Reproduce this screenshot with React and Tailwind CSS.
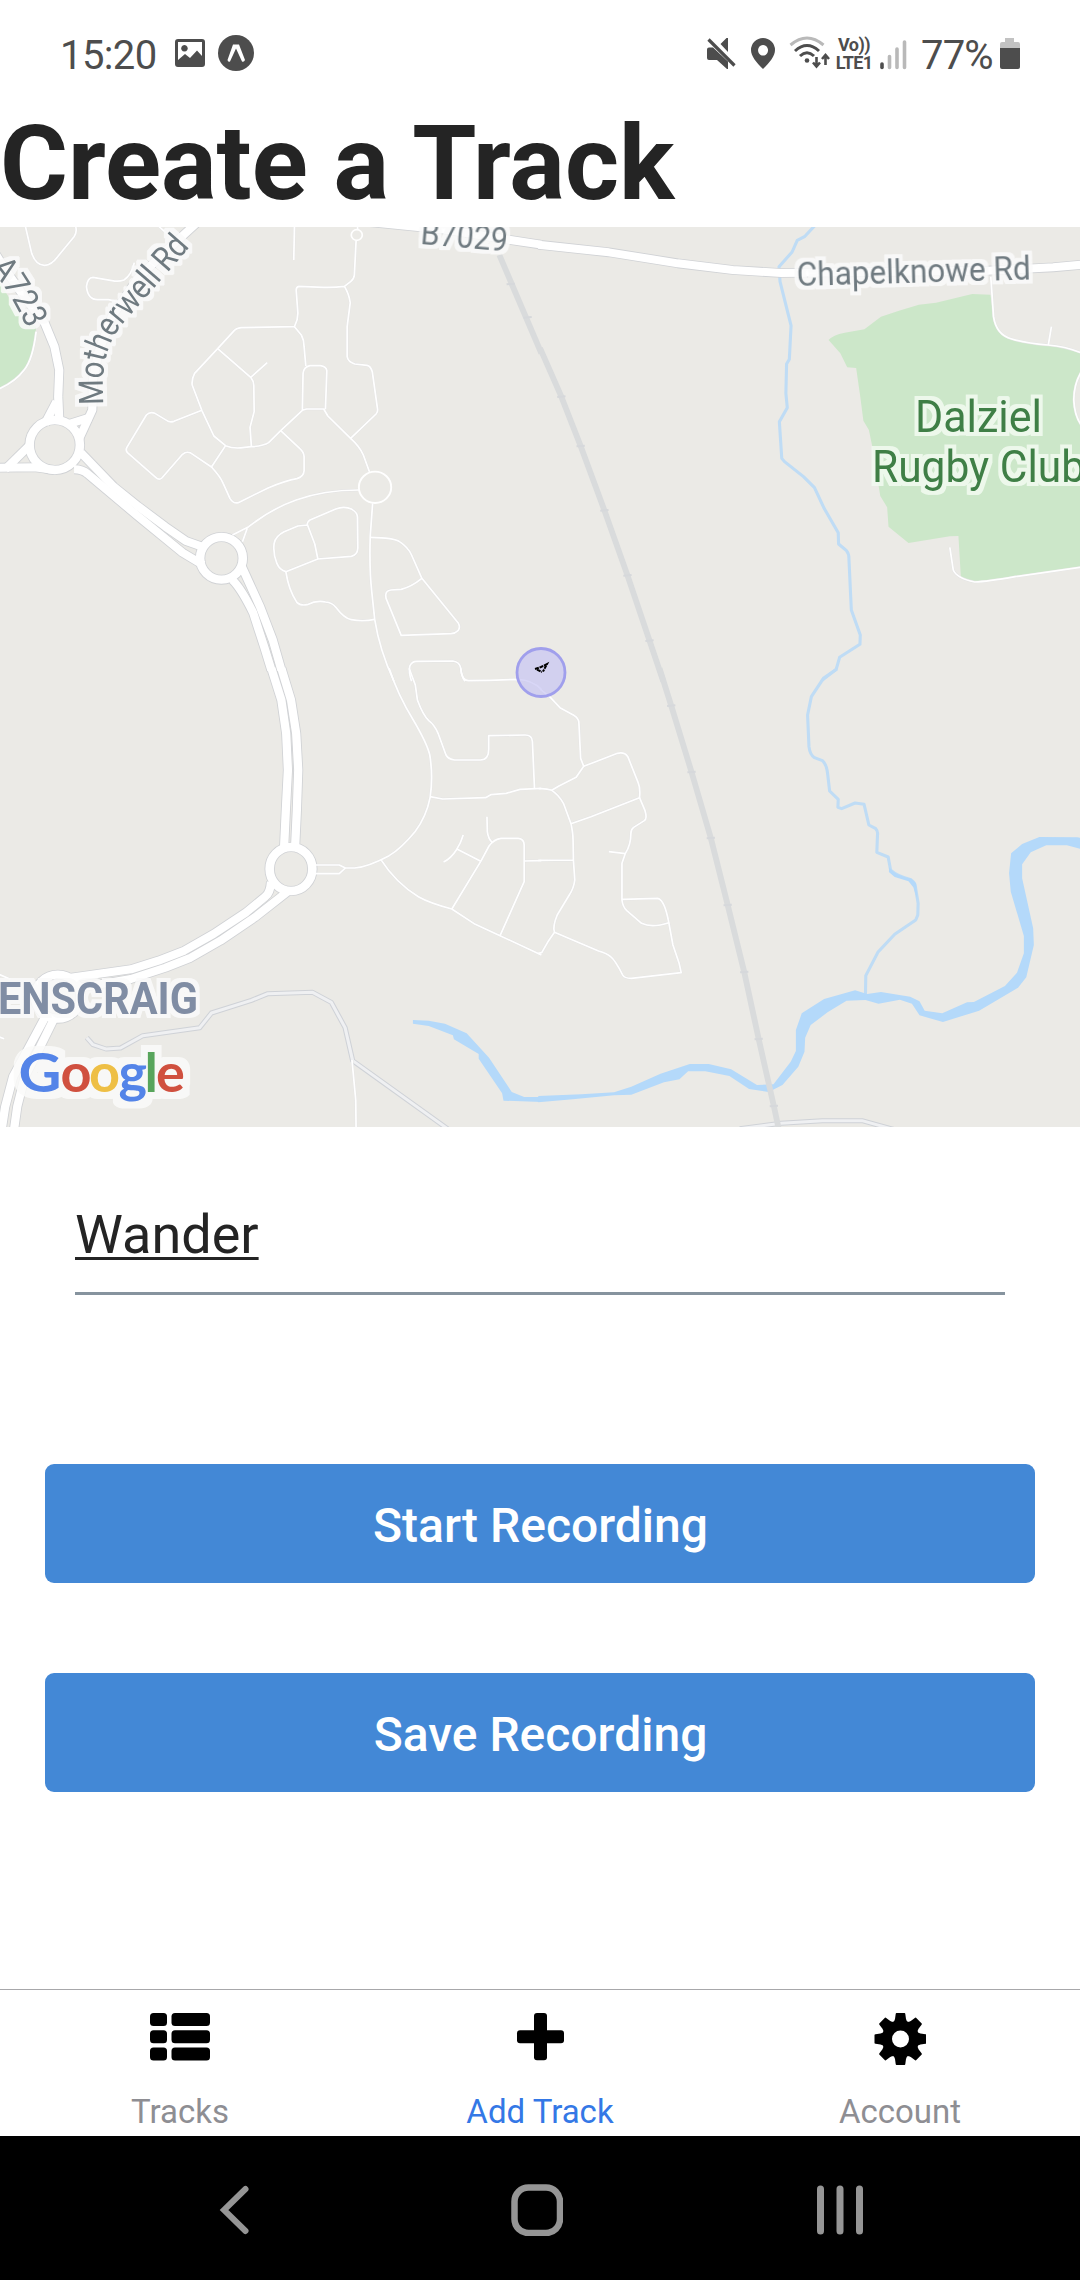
import React from "react";

const QX = 540 / 1568;
const QY = 1 / 3;

// Survey sheets: each covers a 540x460 area and is drawn in its own units.
const SHEETS = {
  nw: `translate(0 -7) scale(${QX} ${QY})`,
  ne: `translate(540 -7) scale(${QX} ${QY})`,
  sw: `translate(0 443) scale(${QX} ${QY})`,
  se: `translate(540 443) scale(${QX} ${QY})`,
};

const MAJOR = {
  nw: [
    "M235 698 L330 800 L400 858 L480 920 L540 963 L600 985",
    "M215 748 Q240 748 255 762 L400 888 L530 998 L590 1035",
    "M-10 743 L100 742 L160 750",
    "M15 748 L90 672",
    "M-20 90 L10 140 L70 230 L130 310 L158 380 L172 450 L169 530 L172 600",
    "M164 545 L130 612",
    "M575 5 L480 95 L400 175 L325 290 L285 400 L270 480 L268 570 L228 660",
    "M262 592 L200 612",
    "M700 1035 L755 1160 L792 1260 L817 1350",
    "M675 1080 Q700 1105 735 1178 L767 1280 L788 1350",
    "M1060 5 L1300 30 L1470 58 L1572 74",
  ],
  ne: ["M-5 74 L200 97 L400 130 L560 150 L700 159 L1300 152 L1490 142 L1575 134"],
  sw: [
    "M788 -5 L817 90 L831 190 L836 300 L830 420 L825 530",
    "M817 -5 L845 90 L860 190 L866 300 L862 420 L857 530",
    "M787 635 Q785 668 770 680 L715 727 L620 792 L535 842 L460 872 L380 898 L200 924",
    "M835 665 L740 742 L640 812 L550 865 L480 893 L380 927 L220 955",
    "M132 1040 L80 1140 L38 1220 L15 1310 L4 1384",
    "M155 1050 L112 1140 L72 1220 L50 1310 L40 1384",
  ],
};

const RINGS = {
  nw: [
    [159, 675, 73, 75],
    [643, 1015, 62, 64],
  ],
  sw: [
    [845, 597, 62, 66],
    [168, 980, 66, 66],
  ],
};

const MINOR = {
  nw: [
    "M74 20 L92 100 Q105 137 130 136 Q150 134 165 113 L215 50 Q224 38 220 20",
    "M390 128 Q382 165 360 180 Q345 186 325 182 L270 172 Q254 172 251 200 Q255 240 285 239 L315 239 L365 250",
    "M462 20 L500 55",
    "M855 20 L853 120",
    "M1038 20 L1039 30 M1034 62 L1029 165 Q1028 177 1018 185 L1000 199 Q970 203 940 202 L868 199 Q860 201 860 210 L865 280 Q865 300 855 320 L700 323 Q685 325 680 332 L632 386 L565 460 Q556 478 558 495 L586 571 L621 648 L655 677 Q680 688 710 682 L730 680 Q765 678 780 668 L815 632 L878 571 L880 460 Q882 441 900 437 L930 437 Q948 440 949 452 L945 568 M878 571 L890 567 L940 567 L952 588 L1018 655 L1092 582 Q1098 575 1096 565 L1081 455 Q1076 438 1066 436 L1030 432 Q1010 425 1008 410 L1008 320 L1017 248 Q1013 220 1000 199",
    "M855 320 L875 345 Q883 360 883 380 L888 438",
    "M632 386 L728 472 L776 428 M728 472 Q738 485 737 500 L738 575 L726 622 L730 680",
    "M586 571 L505 604 Q492 608 485 602 L450 580 Q435 574 425 585 L368 683 Q364 690 370 698 L452 772 Q462 782 470 774 L530 703 Q540 694 552 698 L614 741 L655 677",
    "M614 741 Q640 770 648 790 L668 836 Q678 852 692 848 L780 803 Q830 782 862 776 Q882 770 883 752 L883 710 Q882 695 870 685 L815 632",
    "M1018 655 Q1045 680 1055 705 L1073 756",
    "M1042 810 Q940 810 860 840 Q790 865 722 920 L675 945 M718 925 L704 965",
    "M1082 850 L1075 950 Q1072 1050 1080 1120 L1088 1198 Q1102 1290 1144 1384",
    "M893 915 Q890 907 900 900 L975 867 Q1000 857 1022 868 Q1038 878 1038 892 L1039 985 Q1038 1005 1020 1009 L923 1017 L914 972 L893 915 L865 918 L825 935 Q800 948 796 970 Q792 1000 804 1030 Q812 1050 830 1055 L923 1017",
    "M830 1055 Q838 1110 862 1147 Q872 1158 892 1154 Q920 1140 945 1146 Q965 1148 975 1162 Q1000 1196 1020 1199 Q1055 1206 1088 1198",
    "M1075 952 Q1145 953 1160 965 Q1185 982 1195 1005 L1225 1075 L1330 1208 Q1338 1222 1330 1232 Q1322 1240 1310 1241 L1165 1246 L1121 1135 Q1116 1112 1135 1110 L1165 1108 Q1195 1100 1225 1075",
    "M1195 1384 Q1186 1355 1190 1338 Q1196 1324 1210 1324 L1315 1323 Q1335 1326 1338 1345 Q1340 1370 1350 1384",
    "M105 335 Q95 420 70 450 Q45 485 -5 508",
  ],
  ne: [
    "M1309 170 L1317 290 Q1325 345 1370 357 Q1410 370 1475 375 Q1530 380 1575 400",
    "M1476 375 L1485 320",
    "M1575 450 Q1550 490 1550 540 Q1552 590 1575 620",
    "M1190 982 L1200 1050 Q1210 1075 1262 1086 Q1300 1085 1380 1070 L1575 1041",
  ],
  sw: [
    "M1130 -5 Q1155 75 1200 150 Q1240 220 1248 255 Q1258 320 1249 382 Q1238 440 1205 485 Q1165 535 1130 557 Q1070 590 1030 594 L1003 594 L985 585 L915 585 M1003 594 L985 611 L915 611",
    "M1188 -5 L1206 45 L1212 90 Q1228 135 1245 152 Q1262 165 1272 190 L1295 255 Q1302 268 1320 270 L1395 270 Q1420 270 1419 235 L1419 197 L1525 195 Q1545 195 1546 215 L1552 356",
    "M1338 -5 Q1340 30 1360 32 L1420 31 L1505 28 Q1545 30 1572 58",
    "M1249 380 L1285 387 L1410 383 L1425 374 L1470 370 L1510 358 L1572 355",
    "M1106 569 Q1150 640 1215 680 Q1245 698 1312 717 L1380 763 L1452 797 L1572 855",
    "M1312 717 L1396 574 L1420 528 Q1435 507 1455 505 L1505 505 Q1522 507 1522 525 L1522 635 L1452 797",
    "M1414 440 L1415 485 Q1418 508 1430 518 M1396 574 L1328 538 M1345 495 Q1338 520 1325 540 Q1310 565 1288 576 M1522 573 L1572 572",
    "M1022 1170 L1033 1290 L1034 1384",
    "M-5 912 L30 928 M-5 1100 L12 1106",
  ],
  se: [
    "M0 57 L30 82 L58 113 L98 136 Q113 145 113 160 L118 265 L127 289 L105 322 L55 348 L34 361 Q20 355 -4 356",
    "M127 289 L225 250 Q245 245 255 260 L285 338 Q292 355 289 383 L148 440 L90 461",
    "M34 361 Q55 375 68 400 L90 461 Q96 490 96 510 L97 570 L101 630 Q98 655 85 675 L50 735 Q36 770 42 787 L25 812 L5 848 L-5 850 M97 570 L-5 571",
    "M289 383 L305 422 Q312 445 303 452 L272 472 Q264 478 264 490 Q264 525 248 550 L238 580 L238 690 Q240 710 252 722 L295 760 Q325 775 374 758 Q362 690 342 685 L238 688",
    "M374 758 L386 825 L404 880 L410 908 L265 925 Q245 925 240 915 Q218 870 205 860 Q195 850 170 843 L42 787",
    "M248 551 L200 545",
  ],
};

const STREAM = {
  ne: "M797 18 L768 50 L747 61 L732 96 L694 140 L697 185 L729 317 L724 418 L716 432 L714 520 L718 563 L695 605 L702 715 L710 725 L765 770 L797 803 L825 865 L866 938 L867 972 L890 992 Q897 1000 897 1015 L904 1170 L930 1245 L929 1273 L870 1312 L860 1348 L818 1382",
  se: "M862 -3 L823 25 L788 80 L777 135 L781 230 Q784 255 797 263 L820 272 Q832 283 835 310 L841 363 L866 388 L865 412 L876 416 L915 399 L941 403 L955 465 L975 476 Q982 484 980 495 L978 547 L1011 561 L1018 600 Q1035 617 1075 628 Q1088 636 1090 650 L1098 700 L1097 735 L1091 750 L1030 793 L981 847 L946 917 L945 975",
};

const PATHS = {
  sw: ["M252 1103 L270 1124 L308 1137 L350 1134 L415 1097 L580 1073 L614 1029 L730 991 L778 971 L908 967 L962 997 L1002 1073 L1024 1172 L1310 1384"],
  se: ["M580 1376 L700 1360 L820 1352 L935 1352 L1040 1382"],
};

const RAIL = {
  nw: "M1450 105 L1572 400",
  ne: "M0 384 L62 530 L118 678 L187 871 L254 1066 L318 1262 L358 1384",
  se: "M347 -5 L381 107 L440 306 L496 504 L545 705 L593 906 L635 1107 L679 1308 L693 1376",
};

const TICKS = [
  ["nw", 1483, 192], ["nw", 1532, 292],
  ["ne", 62, 530], ["ne", 118, 678], ["ne", 187, 871], ["ne", 254, 1066], ["ne", 318, 1262],
  ["se", 381, 107], ["se", 440, 306], ["se", 496, 504], ["se", 545, 705], ["se", 593, 906], ["se", 635, 1107], ["se", 679, 1308],
];

function Sheet({ id, children }) {
  return <g transform={SHEETS[id]}>{children}</g>;
}

function Lines({ data, stroke, width }) {
  return Object.entries(data).map(([id, list]) => (
    <Sheet id={id} key={id}>
      {[].concat(list).map((d, i) => (
        <path key={i} d={d} fill="none" stroke={stroke} strokeWidth={width} strokeLinejoin="round" />
      ))}
    </Sheet>
  ));
}

function Rings({ stroke, width }) {
  return Object.entries(RINGS).map(([id, list]) => (
    <Sheet id={id} key={id}>
      {list.map(([cx, cy, rx, ry], i) => (
        <ellipse key={i} cx={cx} cy={cy} rx={rx} ry={ry} fill="none" stroke={stroke} strokeWidth={width} />
      ))}
    </Sheet>
  ));
}

function Halo({ id, color, radius }) {
  return (
    <filter id={id} filterUnits="userSpaceOnUse" x="-20" y="-20" width="1120" height="940" colorInterpolationFilters="sRGB">
      <feMorphology in="SourceAlpha" operator="dilate" radius={radius} result="grown" />
      <feFlood floodColor={color} floodOpacity=".85" />
      <feComposite in2="grown" operator="in" result="halo" />
      <feMerge>
        <feMergeNode in="halo" />
        <feMergeNode in="SourceGraphic" />
      </feMerge>
    </filter>
  );
}

function MapView() {
  return (
    <svg className="block h-[900px] w-full bg-[#ebeae6]" viewBox="0 0 1080 900">
      <Sheet id="nw">
        <path d="M-5 180 L60 290 L105 320 Q98 410 70 450 Q45 485 -5 508Z" fill="#cce7c9" />
      </Sheet>
      <Sheet id="ne">
        <path
          d="M838 360 Q850 345 885 338 L942 328 L990 290 L1040 273 L1100 254 L1150 248 L1255 222 L1308 224 L1317 290 Q1325 345 1370 357 Q1410 370 1475 375 Q1530 380 1575 400 L1575 450 Q1550 490 1550 540 Q1552 590 1575 620 L1575 1041 L1380 1070 Q1300 1085 1262 1086 L1222 1070 L1215 948 L1190 949 L1070 969 L1012 920 L1008 862 L988 828 L965 680 L955 630 L939 602 L930 530 L918 444 L892 442 L872 400Z"
          fill="#cce7c9"
        />
      </Sheet>
      <Lines data={STREAM} stroke="#bfdcf5" width={9} />
      <Sheet id="sw">
        <path
          d="M1199 1050 L1245 1052 L1292 1061 L1355 1090 L1420 1163 L1486 1266 L1522 1281 L1572 1281 L1572 1296 L1462 1292 L1458 1270 L1390 1166 L1390 1152 L1318 1108 L1315 1096 L1245 1068 L1199 1061Z"
          fill="#b4d9fa"
        />
      </Sheet>
      <Sheet id="se">
        <path
          d="M-5 1278 L120 1273 L215 1267 L265 1250 L350 1211 L435 1182 L490 1182 L555 1198 L630 1245 L678 1243 L728 1175 L743 1143 L743 1080 L760 1030 L825 987 L915 961 L950 972 L990 966 L1075 980 L1102 994 L1117 1022 L1168 1030 L1240 997 L1260 996 L1350 948 L1385 908 L1405 850 L1405 798 L1367 665 L1362 610 L1368 550 L1400 522 L1450 501 L1560 502 L1572 504 L1572 537 L1530 526 L1470 526 L1425 547 L1400 583 L1400 625 L1432 775 L1434 825 L1412 922 L1388 953 L1275 1022 L1170 1056 L1102 1036 L1080 1001 L1045 989 L983 1001 L945 990 L890 992 L835 1027 L786 1065 L770 1103 L768 1145 L750 1190 L704 1245 L664 1266 L607 1257 L550 1218 L480 1204 L430 1204 L405 1228 L360 1237 L265 1274 L215 1276 L95 1288 L-5 1297Z"
          fill="#b4d9fa"
        />
        <path d="M1014 592 Q1028 616 1078 626 L1092 640 L1096 690 L1084 652 L1070 634 L1030 621 L1013 606Z" fill="#b4d9fa" />
      </Sheet>

      <Lines data={PATHS} stroke="#cfd2d7" width={15} />
      <Lines data={PATHS} stroke="#eff0f2" width={9} />
      <Lines data={MINOR} stroke="#e3e3e4" width={7} />
      <Lines data={MAJOR} stroke="#d0d2d5" width={29} />
      <Rings stroke="#d0d2d5" width={30} />
      <Lines data={MINOR} stroke="#ffffff" width={5} />
      <Sheet id="nw">
        <ellipse cx="1036" cy="45" rx="16" ry="16" fill="none" stroke="#fff" strokeWidth="5" />
        <ellipse cx="1089" cy="802" rx="47" ry="47" fill="none" stroke="#fff" strokeWidth="5.500" />
      </Sheet>
      <Lines data={MAJOR} stroke="#ffffff" width={24} />
      <Rings stroke="#ffffff" width={25} />
      <Lines data={RAIL} stroke="#d9dbdc" width={17} />
      {TICKS.map(([id, x, y]) => (
        <Sheet id={id} key={`${x}-${y}`}>
          <path d={`M${x - 12} ${y + 1} L${x + 12} ${y - 1}`} stroke="#d6d8db" strokeWidth="6" />
        </Sheet>
      ))}

      <defs>
        <path id="motherwell" d="M103.500 178 C100 130 110 108 135 83 C151 65 166 47 197 12" />
        <path id="a723" d="M-10 41 C4 57 18 80 31 110" />
        <Halo id="halo-road" color="#fbfbfb" radius="4" />
        <Halo id="halo-park" color="#f2faf1" radius="4" />
        <Halo id="halo-logo" color="#fbfaf9" radius="7" />
      </defs>
      <g fontFamily="Roboto, sans-serif" filter="url(#halo-road)" className="fill-[#6f7a80] text-[34px]">
        <text>
          <textPath href="#motherwell" textLength="188" lengthAdjust="spacingAndGlyphs">Motherwell Rd</textPath>
        </text>
        <text>
          <textPath href="#a723" textLength="72" lengthAdjust="spacingAndGlyphs">A723</textPath>
        </text>
        <text x="420" y="17" textLength="87" lengthAdjust="spacingAndGlyphs" transform="rotate(5 421 17)">B7029</text>
        <text x="797" y="58.500" textLength="234" lengthAdjust="spacingAndGlyphs" transform="rotate(-1.6 797 58.500)">Chapelknowe Rd</text>
        <text x="-2" y="786.500" textLength="200" lengthAdjust="spacingAndGlyphs" className="fill-[#808da4] text-[45px] font-bold">
          ENSCRAIG
        </text>
      </g>
      <g fontFamily="Roboto, sans-serif" filter="url(#halo-park)" className="fill-[#3f7f46] text-[45px]">
        <text x="915" y="204.500" textLength="127" lengthAdjust="spacingAndGlyphs">Dalziel</text>
        <text x="872" y="255" textLength="213" lengthAdjust="spacingAndGlyphs">Rugby Club</text>
      </g>

      <g fontFamily="Lato, sans-serif" filter="url(#halo-logo)" className="text-[54px] font-bold">
        <text y="865">
          <tspan x="18.500" textLength="43" lengthAdjust="spacingAndGlyphs" className="fill-[#5484e8]">G</tspan>
          <tspan x="60.500" className="fill-[#d0503f]">o</tspan>
          <tspan x="89" className="fill-[#eebf45]">o</tspan>
          <tspan x="118.500" className="fill-[#5484e8]">g</tspan>
          <tspan x="144.500" className="fill-[#58a55c]">l</tspan>
          <tspan x="156" className="fill-[#d0503f]">e</tspan>
        </text>
      </g>

      <circle cx="541" cy="445.5" r="24" fill="#c8c5f2" fillOpacity=".7" stroke="#a09fec" strokeWidth="2.8" />
      <path d="M535 442 L541 440 L547 437 L543 444.500 M537 442.500 L542 445" fill="none" stroke="#000" strokeWidth="2" strokeDasharray="4 .8" />
    </svg>
  );
}

function StatusBar() {
  return (
    <header className="flex h-[112px] items-start pl-[60px] text-[#4d4d4d]">
      <span className="mt-[32px] w-[115px] text-[40px] leading-[47px] tracking-[-0.6px]">15:20</span>
      <svg className="mt-[39px] h-7 w-[30px]" viewBox="0 0 30 28">
        <path fill="currentColor" fillRule="evenodd" d="M3 0H27Q30 0 30 3V25Q30 28 27 28H3Q0 28 0 25V3Q0 0 3 0ZM3 3V21L10 15L15 19L22 11.5L27 17V3ZM9.5 6A3.3 3.3 0 1 1 9.4 6Z" />
      </svg>
      <svg className="mt-[35px] ml-[13px] h-9 w-9" viewBox="0 0 36 36">
        <circle cx="18" cy="18" r="18" fill="currentColor" />
        <path d="M15 9.5H21L27 25Q26 27.500 24 26.500L18 13.500L12 26.500Q10 27.500 9.500 25Z" fill="#fff" />
      </svg>
      <div className="ml-[453px] flex">
        <svg className="mt-[38px] h-8 w-[29px]" viewBox="0 0 29 32">
          <path fill="currentColor" d="M0 11.500Q0 9.500 2 9.500H6L21 23.500V31H20L10 22H2Q0 22 0 20ZM13.500 6L19.500 0H21V14Z" />
          <path d="M1.500 1.500L27.500 27.500" stroke="currentColor" strokeWidth="3.200" />
        </svg>
        <svg className="mt-[38px] ml-[15px] h-[31px] w-6" viewBox="0 0 24 31">
          <path fill="currentColor" fillRule="evenodd" d="M12 0A12 12 0 0 1 24 12C24 18 19 24 12 31C5 24 0 18 0 12A12 12 0 0 1 12 0ZM12 7A5 5.300 0 1 0 12.100 7Z" />
        </svg>
        <svg className="mt-[36px] ml-[14px] h-[34px] w-[42px]" viewBox="0 0 42 34" fill="none" stroke="currentColor" strokeWidth="3">
          <path d="M1.500 9Q18 -5 34.500 9" stroke="#b9b9b9" />
          <path d="M6 15Q18 4 30 15M11 20Q18 13.500 25 20" />
          <circle cx="18" cy="24.500" r="2.300" fill="currentColor" stroke="none" />
          <path d="M27.500 21V30M24 26.500L27.500 30.500L31 26.500M36.500 29V20M33 23L36.500 19L40 23" strokeWidth="2.600" />
        </svg>
        <div className="mt-[34px] ml-[3px] flex w-[40px] flex-col items-center text-[18px] font-bold">
          <span className="h-[18px] leading-[21px] tracking-[-0.5px]">Vo))</span>
          <span className="leading-[21px] tracking-[-0.7px]">LTE1</span>
        </div>
        <svg className="mt-[39px] ml-[6px] h-[31px] w-[28px]" viewBox="0 0 28 31" strokeWidth="3.600" strokeLinecap="round">
          <path d="M2 25V28.500" stroke="#4d4d4d" />
          <path d="M9.500 17.500V28.500M17 10V28.500M24.500 3V28.500" stroke="#b9b9b9" />
        </svg>
        <span className="mt-[32px] ml-[13px] w-[79px] text-[40px] leading-[47px] tracking-[-0.8px]">77%</span>
        <svg className="mt-[38px] h-[31px] w-5" viewBox="0 0 20 31">
          <path d="M5 0H14V4H18Q20 4 20 6V10H0V6Q0 4 2 4H5Z" fill="#c2c2c2" />
          <path d="M0 10H20V29Q20 31 18 31H2Q0 31 0 29Z" fill="currentColor" />
        </svg>
      </div>
    </header>
  );
}

function ActionButton({ children }) {
  return (
    <button className="flex h-[119px] w-full items-center justify-center rounded-[9px] bg-[#4388d6] text-[48px] font-medium text-white">
      <span className="pt-1 pl-px">{children}</span>
    </button>
  );
}

function ListIcon() {
  return (
    <svg className="h-12 w-[60px]" viewBox="0 0 60 48">
      {[0, 17.2, 34.4].map((y) => (
        <g key={y}>
          <rect y={y} width="17" height="13" rx="3.500" />
          <rect x="21.500" y={y} width="38.500" height="13" rx="3.500" />
        </g>
      ))}
    </svg>
  );
}

function PlusIcon() {
  return (
    <svg className="h-12 w-12" viewBox="0 0 48 48">
      <rect x="1" y="17.200" width="47" height="13" rx="3" />
      <rect x="18" y="0" width="13" height="47.300" rx="3" />
    </svg>
  );
}

function GearIcon() {
  return (
    <svg className="h-[52px] w-[52px]" viewBox="-26.500 -26 52 52">
      <circle r="13.500" fill="none" stroke="#000" strokeWidth="10" />
      {[0, 45, 90, 135, 180, 225, 270, 315].map((a) => (
        <path key={a} transform={`rotate(${a})`} d="M-8 -16Q-5.800 -18 -5.500 -20L-4.800 -25Q-4.700 -26 -4 -26H4Q4.700 -26 4.800 -25L5.500 -20Q5.800 -18 8 -16Z" />
      ))}
    </svg>
  );
}

function Tab({ icon, label, className }) {
  return (
    <div className="flex flex-1 flex-col items-center pt-[23px]">
      <div className="h-[79px]">{icon}</div>
      <span className={`text-[33px] leading-[39px] ${className}`}>{label}</span>
    </div>
  );
}

export default function App() {
  return (
    <div className="flex h-[2280px] w-[1080px] flex-col overflow-hidden bg-white font-['Roboto',sans-serif]">
      <StatusBar />
      <h1 className="h-[115px] text-[103.8px] leading-[104px] font-bold whitespace-nowrap text-[#242424]">Create a Track</h1>
      <MapView />
      <div className="mx-[75px] mt-[60px] flex h-[108px] items-center border-b-[3px] border-[#86939e] pb-[9px]">
        <span className="text-[54px] leading-[54px] text-[#242424] underline decoration-[3px] underline-offset-[4px]">Wander</span>
      </div>
      <div className="mx-[45px] mt-[169px] flex flex-col gap-[90px]">
        <ActionButton>Start Recording</ActionButton>
        <ActionButton>Save Recording</ActionButton>
      </div>
      <nav className="mt-auto flex h-[147px] shrink-0 border-t border-[#a7a7aa]">
        <Tab icon={<ListIcon />} label="Tracks" className="text-[#8e8e93]" />
        <Tab icon={<PlusIcon />} label="Add Track" className="text-[#3478e6]" />
        <Tab icon={<GearIcon />} label="Account" className="text-[#8e8e93]" />
      </nav>
      <footer className="flex h-36 shrink-0 items-start bg-black pt-12 pl-[218px]">
        <svg className="h-[52px] w-8" viewBox="0 0 32 52" fill="none" stroke="#959595" strokeWidth="6" strokeLinecap="round">
          <path d="M27.500 5L6 26L27.500 47" />
        </svg>
        <svg className="ml-[261px] h-[52px] w-[52px]" viewBox="0 0 52 52" fill="none" stroke="#959595" strokeWidth="6.500">
          <rect x="3.500" y="3.500" width="45.500" height="45.500" rx="14" />
        </svg>
        <svg className="ml-[254px] h-[52px] w-[46px]" viewBox="0 0 46 52" stroke="#959595" strokeWidth="7" strokeLinecap="round">
          <path d="M3.500 5V47M23 5V47M42.500 5V47" />
        </svg>
      </footer>
    </div>
  );
}
